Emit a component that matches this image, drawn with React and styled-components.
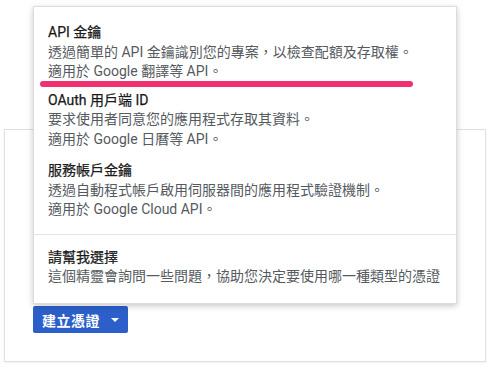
import React from 'react';
import styled, { createGlobalStyle } from 'styled-components';

const GlobalStyle = createGlobalStyle`
  html, body {
    margin: 0;
    padding: 0;
    background: #ffffff;
  }
  body {
    font-family: Roboto, "Noto Sans CJK TC", "Noto Sans", sans-serif;
    -webkit-font-smoothing: antialiased;
  }
`;

const Page = styled.div`
  width: 500px;
  height: 376px;
  padding: 129px 14px 0 4px;
  box-sizing: border-box;
  overflow: hidden;
`;

const Card = styled.div`
  height: 233px;
  border: 1px solid #e0e0e0;
  box-shadow: 0 1px 2px rgba(0, 0, 0, 0.06);
  box-sizing: border-box;
  padding: 176px 0 0 28px;
`;

const ButtonWrap = styled.div`
  position: relative;
  display: inline-block;
`;

const CreateButton = styled.button`
  display: flex;
  align-items: center;
  width: 95px;
  height: 27px;
  padding: 0 0 0 9px;
  box-sizing: border-box;
  border: none;
  border-radius: 2px;
  background: #2c5fc9;
  color: #ffffff;
  font-family: Roboto, "Noto Sans CJK TC", sans-serif;
  font-size: 14px;
  font-weight: 700;
  letter-spacing: 0.5px;
  white-space: nowrap;
`;

const Caret = styled.span`
  width: 0;
  height: 0;
  margin-left: 11px;
  border-left: 4px solid transparent;
  border-right: 4px solid transparent;
  border-top: 4px solid #ffffff;
`;

const Menu = styled.div`
  position: absolute;
  left: 0;
  bottom: calc(100% + 2px);
  width: 424px;
  height: 298px;
  background: #ffffff;
  border: 1px solid #dcdcdc;
  box-sizing: border-box;
  box-shadow: 0 2px 6px rgba(0, 0, 0, 0.22);
  display: flex;
  flex-direction: column;
`;

const Section = styled.div`
  display: flex;
  flex-direction: column;
  padding: ${p => p.$pad};
  border-top: ${p => (p.$divided ? '1px solid #e3e3e3' : 'none')};
`;

const Item = styled.div`
  position: relative;
  display: flex;
  flex-direction: column;
  margin-top: ${p => p.$mt || 0}px;
  font-size: 14px;
  line-height: 19.5px;
`;

const Title = styled.div`
  color: #1a1a1a;
  -webkit-text-stroke: 0.25px #1a1a1a;
`;

const Desc = styled.div`
  color: #555a5e;
  white-space: nowrap;
`;

const Highlight = styled.div`
  position: absolute;
  left: -8px;
  top: 58px;
  width: 373px;
  height: 6px;
  border-radius: 3px;
  background: #f0306f;
`;

const options = [
  {
    title: 'API 金鑰',
    lines: ['透過簡單的 API 金鑰識別您的專案，以檢查配額及存取權。', '適用於 Google 翻譯等 API。'],
    mark: true,
    mt: 0,
  },
  {
    title: 'OAuth 用戶端 ID',
    lines: ['要求使用者同意您的應用程式存取其資料。', '適用於 Google 日曆等 API。'],
    mt: 9,
  },
  {
    title: '服務帳戶金鑰',
    lines: ['透過自動程式帳戶啟用伺服器間的應用程式驗證機制。', '適用於 Google Cloud API。'],
    mt: 12,
  },
];

export default function App() {
  return (
    <>
      <GlobalStyle />
      <Page>
        <Card>
          <ButtonWrap>
            <Menu>
              <Section $pad="16px 14px 14px">
                {options.map(o => (
                  <Item key={o.title} $mt={o.mt}>
                    <Title>{o.title}</Title>
                    {o.lines.map(l => (
                      <Desc key={l}>{l}</Desc>
                    ))}
                    {o.mark && <Highlight />}
                  </Item>
                ))}
              </Section>
              <Section $pad="13px 14px" $divided>
                <Item>
                  <Title>請幫我選擇</Title>
                  <Desc>這個精靈會詢問一些問題，協助您決定要使用哪一種類型的憑證</Desc>
                </Item>
              </Section>
            </Menu>
            <CreateButton>
              建立憑證
              <Caret />
            </CreateButton>
          </ButtonWrap>
        </Card>
      </Page>
    </>
  );
}
